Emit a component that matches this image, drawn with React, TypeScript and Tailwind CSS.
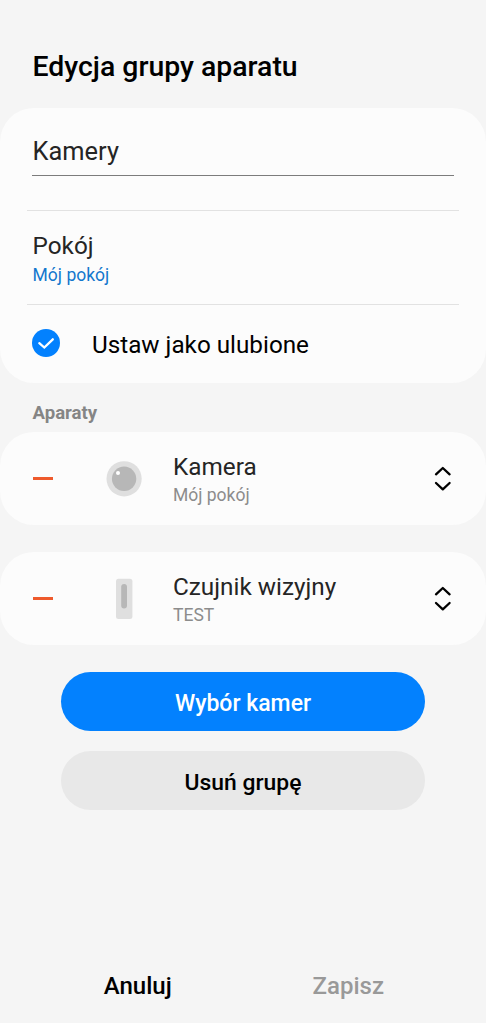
const Minus = () => <span className="ml-[33px] h-[3px] w-5 bg-[#ee5a2c]" />;

const CameraIcon = () => (
  <svg width="36" height="36" viewBox="0 0 36 36">
    <circle cx="18.1" cy="17.8" r="17.6" fill="#dfdfdf" />
    <circle cx="18.1" cy="17.8" r="12.2" fill="#b7b7b7" />
    <circle cx="12" cy="12" r="2" fill="#fff" />
  </svg>
);

const SensorIcon = () => (
  <svg width="18" height="42" viewBox="0 0 18 42">
    <rect x="1" y="0.8" width="16.4" height="40.2" rx="2.5" fill="#dfdfdf" />
    <rect x="6.2" y="6" width="5.8" height="24.5" rx="2.9" fill="#b7b7b7" />
  </svg>
);

const SortIcon = () => (
  <svg width="18" height="26" viewBox="0 0 18 26" fill="none" stroke="#000" strokeWidth="2.3" strokeLinecap="round" strokeLinejoin="round">
    <path d="M2 8.3 8.8 2 15.6 8.3M2 17 8.8 23.3 15.6 17" />
  </svg>
);

const devices = [
  { name: "Kamera", room: "Mój pokój", icon: <CameraIcon /> },
  { name: "Czujnik wizyjny", room: "TEST", icon: <SensorIcon /> },
];

const App = () => {
  return (
    <div className="flex h-[1023px] w-[486px] flex-col overflow-hidden bg-[#f5f5f5] font-['Roboto',sans-serif] text-[#252525]">
      <h1 className="mt-[48px] ml-[32.5px] h-[60px] pt-px text-[28.4px] leading-9 font-medium text-black">
        Edycja grupy aparatu
      </h1>
      <section className="h-[275px] rounded-[34px] bg-[#fcfcfc] px-[27px]">
        <div className="h-[102px] px-[5px] pt-[27px]">
          <div className="h-[41px] border-b border-[#7c7c7c] pl-[0.6px] text-[25.4px] leading-8">Kamery</div>
        </div>
        <div className="h-[94px] border-t border-[#e2e2e2] px-[5.6px] pt-[19px]">
          <p className="text-[24.3px] leading-8">Pokój</p>
          <p className="mt-px text-[17.5px] leading-6 text-[#1377cd]">Mój pokój</p>
        </div>
        <div className="flex h-[79px] items-center border-t border-[#e2e2e2] pb-[2px] pl-[5px]">
          <svg width="28" height="28" viewBox="0 0 28 28">
            <circle cx="14" cy="14" r="14" fill="#0381fe" />
            <path d="m7.3 14.2 5 4.3 8.5-8.2" fill="none" stroke="#fff" strokeWidth="2.3" strokeLinecap="round" />
          </svg>
          <span className="mt-[4px] ml-8 text-[24.25px] text-black">Ustaw jako ulubione</span>
        </div>
      </section>
      <h2 className="h-[49px] pt-[18px] pl-[32.5px] text-[18.6px] leading-6 font-bold text-[#858585]">
        Aparaty
      </h2>
      <div className="flex flex-col gap-[27px]">
        {devices.map((device) => (
          <section key={device.name} className="flex h-[93px] items-center rounded-[34px] bg-[#fcfcfc]">
            <Minus />
            <div className="ml-[35px] flex w-[72px] justify-center">{device.icon}</div>
            <div className="ml-[13px] flex-1">
              <p className="text-[24.3px] leading-8">{device.name}</p>
              <p className="text-[17.5px] leading-6 text-[#8c8c8c]">{device.room}</p>
            </div>
            <div className="mr-[34px]">
              <SortIcon />
            </div>
          </section>
        ))}
      </div>
      <div className="mt-[27px] flex flex-col gap-5 px-[61px] text-[23px] font-medium">
        <button className="h-[59px] rounded-full bg-[#0381fe] pt-[5px] text-white">Wybór kamer</button>
        <button className="h-[59px] rounded-full bg-[#e8e8e8] pt-[5px] text-[22.9px] text-black">Usuń grupę</button>
      </div>
      <footer className="mt-auto mb-[19px] flex px-[33px] text-[24px] leading-9 font-medium">
        <button className="flex-1 pr-px text-black">Anuluj</button>
        <button className="flex-1 text-[#999]">Zapisz</button>
      </footer>
    </div>
  );
};

export default App;
